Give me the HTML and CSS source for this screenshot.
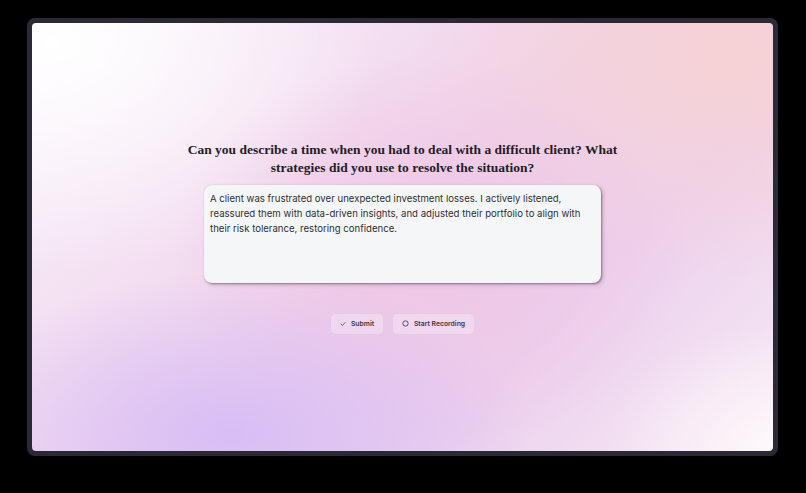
FILE: index.html
```html
<!DOCTYPE html>
<html>
<head>
<meta charset="utf-8">
<link rel="stylesheet" href="styles.css">
</head>
<body>
<div class="frame">
  <div class="screen">
    <div class="content">
      <h1 class="question">Can you describe a time when you had to deal with a difficult client? What strategies did you use to resolve the situation?</h1>
      <div class="answer">A client was frustrated over unexpected investment losses. I actively listened, reassured them with data-driven insights, and adjusted their portfolio to align with their risk tolerance, restoring confidence.</div>
      <div class="actions">
        <button class="btn btn-submit">
          <svg class="ico" viewBox="0 0 10 10" width="6" height="6"><path d="M1.5 5.2 L4 7.5 L8.5 2.5" fill="none" stroke="#5a5366" stroke-width="1.4" stroke-linecap="round" stroke-linejoin="round"/></svg>
          <span>Submit</span>
        </button>
        <button class="btn btn-rec">
          <svg class="ico" viewBox="0 0 10 10" width="7" height="7"><circle cx="5" cy="5" r="3.8" fill="none" stroke="#3e3848" stroke-width="1.2"/></svg>
          <span>Start Recording</span>
        </button>
      </div>
    </div>
  </div>
</div>
</body>
</html>
```
FILE: styles.css
```css
html, body {
  margin: 0;
  padding: 0;
  background: #000;
  width: 806px;
  height: 493px;
  overflow: hidden;
}
body {
  padding: 18px 0 0 27px;
  box-sizing: border-box;
}
.frame {
  width: 751px;
  height: 438px;
  box-sizing: border-box;
  padding: 5px;
  background: #2c2937;
  border-radius: 8px;
}
.screen {
  width: 100%;
  height: 100%;
  border-radius: 4px;
  overflow: hidden;
  display: flex;
  align-items: center;
  justify-content: center;
  background:
    radial-gradient(ellipse 300px 160px at 200px 410px, rgba(214,188,246,0.95), rgba(214,188,246,0) 100%),
    radial-gradient(ellipse 260px 200px at 400px 230px, rgba(238,196,228,0.9), rgba(238,196,228,0) 100%),
    radial-gradient(ellipse 320px 230px at 700px 30px, rgba(246,210,212,1), rgba(246,210,212,0) 100%),
    radial-gradient(ellipse 180px 130px at 750px 430px, rgba(255,250,252,0.9), rgba(255,250,252,0) 100%),
    radial-gradient(ellipse 330px 230px at 20px 20px, rgba(255,255,255,1), rgba(255,255,255,0) 100%),
    linear-gradient(135deg, #f8f2fb 0%, #f0d2ea 50%, #ecd0ee 70%, #f6eaf3 100%);
}
.content {
  display: flex;
  flex-direction: column;
  align-items: center;
  margin-top: 0;
}
.question {
  margin: 0;
  width: 460px;
  text-align: center;
  font-family: "Liberation Serif", "DejaVu Serif", serif;
  font-weight: bold;
  font-size: 13.5px;
  line-height: 18px;
  color: #231c26;
}
.answer {
  margin-top: 8px;
  width: 397px;
  height: 98px;
  box-sizing: border-box;
  padding: 6px 6px;
  background: #f5f6f8;
  border-radius: 8px;
  box-shadow: 1px 1px 2px rgba(60,50,60,0.45), 2px 2px 4px rgba(60,50,60,0.2), inset 0 0 1px rgba(0,0,0,0.1);
  font-family: Inter, "Noto Sans", sans-serif;
  font-size: 9.6px;
  line-height: 15px;
  color: #2f2f33;
}
.actions {
  margin-top: 31px;
  display: flex;
  gap: 10px;
}
.btn {
  display: flex;
  align-items: center;
  justify-content: center;
  gap: 5px;
  height: 20px;
  border: none;
  border-radius: 5px;
  background: rgba(255,255,255,0.28);
  font-family: Inter, "Noto Sans", sans-serif;
  font-weight: 600;
  font-size: 6.8px;
  color: #3a3444;
  padding: 0;
  white-space: nowrap;
  cursor: pointer;
}
.btn-submit {
  width: 52px;
}
.btn-rec {
  width: 81px;
}
.ico {
  flex: none;
}
```
